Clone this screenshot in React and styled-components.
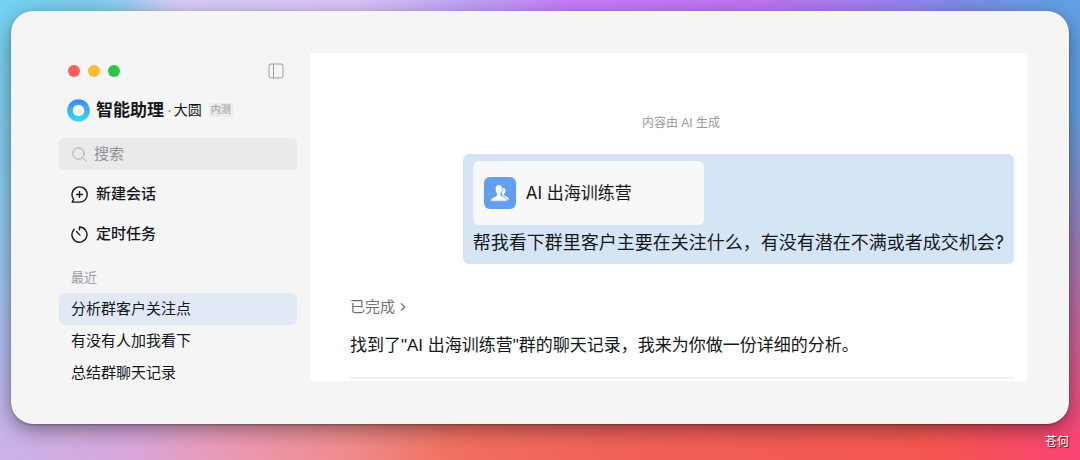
import React from 'react';
import styled, { createGlobalStyle } from 'styled-components';

const GlobalStyle = createGlobalStyle`
  *, *::before, *::after { box-sizing: border-box; }
  html, body { margin: 0; padding: 0; }
  body {
    font-family: 'Liberation Sans', 'Noto Sans CJK SC', sans-serif;
    color: #14171c;
    -webkit-font-smoothing: antialiased;
  }
  button, input { font: inherit; color: inherit; }
`;

const Desktop = styled.div`
  position: relative;
  min-height: 100vh;
  padding: 11px 11px 0;
  display: flex;
  flex-direction: column;
  background:
    radial-gradient(ellipse 180px 260px at 0% 0%, #72d3f3 0%, #7fcbea 40%, transparent 100%),
    linear-gradient(to right, #72d3f3 0%, #78d0ee 7%, #d8cdf8 15%, #d8c4f8 33%, #bea0f6 44%, #c67cf9 53%, #bf74f2 70%, #9b82ee 82%, #7a90e8 90%, #62a0e4 98%);

  &::before {
    content: '';
    position: absolute;
    inset: 0;
    background: linear-gradient(to right, #c9b2e8 0%, #d8a6dc 12%, #ea9bb8 20%, #f08c8c 32%, #f2705f 42%, #f06056 58%, #f4574f 86%, #fb4474 100%);
    mask-image: linear-gradient(to bottom, transparent 25%, #000 95%);
  }
`;

const Window = styled.div`
  position: relative;
  display: flex;
  gap: 13px;
  padding: 42px 42px 35px 48px;
  border-radius: 22px;
  background: #f5f5f5;
  box-shadow: 0 6px 20px rgba(0, 0, 0, 0.4), 0 1px 2px rgba(0, 0, 0, 0.3);
`;

const Sidebar = styled.aside`
  flex: 0 0 238px;
  min-width: 0;
  display: flex;
  flex-direction: column;
`;

const TitleBar = styled.div`
  display: flex;
  align-items: center;
  justify-content: space-between;
  height: 36px;
  padding: 0 13px 0 9px;
`;

const Lights = styled.div`
  display: flex;
  gap: 8px;
`;

const Light = styled.button`
  width: 12px;
  height: 12px;
  padding: 0;
  border: 0;
  border-radius: 50%;
  background: ${(p) => p.$color};
`;

const IconButton = styled.button`
  display: flex;
  padding: 0;
  border: 0;
  background: none;
  color: #9a9da2;
`;

const Brand = styled.div`
  display: flex;
  align-items: center;
  height: 42px;
  padding-left: 8px;
`;

const BrandName = styled.h1`
  margin: 0 0 0 6px;
  padding-top: 2px;
  font-size: 17px;
  line-height: 24px;
  font-weight: 700;
`;

const BrandDot = styled.span`
  margin: 0 2px 0 3px;
  font-size: 14px;
  color: #73767b;
`;

const BrandUser = styled.span`
  font-size: 14px;
  line-height: 20px;
`;

const Badge = styled.span`
  margin-left: 7px;
  padding: 0 2px;
  border-radius: 2px;
  background: #ebebec;
  color: #96999e;
  font-size: 10px;
  line-height: 14px;
`;

const SearchBox = styled.label`
  display: flex;
  align-items: center;
  gap: 7px;
  height: 32px;
  margin: 7px 0 8px;
  padding: 0 13px;
  border-radius: 5px;
  background: #eaeaeb;
  color: #a3a6ab;

  input {
    flex: 1;
    width: 100%;
    min-width: 0;
    padding: 0;
    border: 0;
    outline: 0;
    background: none;
    font-size: 15px;
    line-height: 24px;
  }
  input::placeholder { color: #8e9196; opacity: 1; }
  svg { flex: none; }
`;

const Action = styled.button`
  display: flex;
  align-items: center;
  gap: 8px;
  height: 32px;
  margin-bottom: 8px;
  padding: 0 12px;
  border: 0;
  background: none;
  font-size: 15px;
  line-height: 24px;
  font-weight: 500;
  text-align: left;
`;

const SectionLabel = styled.h2`
  margin: 10px 0 5px;
  padding: 0 12px;
  font-size: 13px;
  line-height: 20px;
  font-weight: 400;
  color: #9a9da2;
`;

const History = styled.nav`
  display: flex;
  flex-direction: column;
`;

const HistoryItem = styled.a`
  padding: 0 12px;
  border-radius: 6px;
  background: ${(p) => (p.$active ? '#e1e8f6' : 'transparent')};
  color: inherit;
  font-size: 15px;
  line-height: 32px;
  text-decoration: none;
`;

const Chat = styled.main`
  flex: 1;
  min-width: 0;
  display: flex;
  flex-direction: column;
  margin-bottom: 8px;
  padding: 60px 13px 2px 40px;
  background: #fff;
`;

const Notice = styled.p`
  margin: 0 0 21px;
  padding-right: 2px;
  font-size: 12px;
  line-height: 20px;
  text-align: center;
  color: #96999e;
`;

const Bubble = styled.section`
  align-self: flex-end;
  padding: 7px 10px;
  border-radius: 6px;
  background: #d6e5f6;
  font-family: Inter, 'Noto Sans CJK SC', sans-serif;

  p {
    margin: 4px 0 0;
    font-size: 18px;
    line-height: 28px;
  }
`;

const GroupCard = styled.div`
  display: flex;
  align-items: center;
  gap: 10px;
  width: 231px;
  height: 64px;
  padding: 0 11px;
  border-radius: 6px;
  background: #f8f8f8;
  font-size: 17px;
  line-height: 28px;
`;

const Status = styled.button`
  align-self: flex-start;
  display: flex;
  align-items: center;
  gap: 5px;
  margin: 31px 0 12px;
  padding: 0;
  border: 0;
  background: none;
  color: #6d7075;
  font-size: 15px;
  line-height: 24px;
`;

const Reply = styled.p`
  margin: 0;
  font-size: 17px;
  line-height: 30px;
`;

const Divider = styled.hr`
  width: 100%;
  height: 2px;
  margin: 16px 0 0;
  border: 0;
  background: #f0f0f1;
`;

const Signature = styled.footer`
  position: relative;
  padding: 8px 0 6px;
  color: #fff;
  font-size: 12px;
  line-height: 20px;
  text-align: right;
  text-shadow: 1px 1px 1px rgba(0, 0, 0, 0.7);
`;

const PanelIcon = () => (
  <svg width="16" height="16" viewBox="0 0 16 16" fill="none" stroke="currentColor">
    <rect x="1" y="1" width="14" height="14" rx="2" />
    <path d="M5.5 1v14" />
  </svg>
);

const LogoIcon = () => (
  <svg width="23" height="23" viewBox="0 0 23 23" fill="none">
    <defs>
      <linearGradient id="ring" x1="0" y1="0" x2="0" y2="1">
        <stop offset="0" stopColor="#3d86f2" />
        <stop offset="1" stopColor="#3bdcf8" />
      </linearGradient>
    </defs>
    <circle cx="11.5" cy="11.5" r="11.3" fill="url(#ring)" />
    <circle cx="11.5" cy="11.5" r="5.8" fill="#fff" />
  </svg>
);

const SearchIcon = () => (
  <svg width="15" height="15" viewBox="0 0 15 15" fill="none" stroke="currentColor" strokeLinecap="round">
    <circle cx="6.5" cy="6.5" r="5.7" />
    <path d="M10.8 10.8l3.2 3.2" />
  </svg>
);

const NewChatIcon = () => (
  <svg width="17" height="17" viewBox="0 0 16 16" fill="none" stroke="currentColor" strokeWidth="1.3" strokeLinecap="round" strokeLinejoin="round">
    <path d="M8 15.200H1.100L2.500 12.500A7.150 7.150 0 1 1 8 15.200z" />
    <path d="M8 5.300v5.400M5.300 8h5.400" />
  </svg>
);

const TimerIcon = () => (
  <svg width="17" height="17" viewBox="0 0 16 16" fill="none" stroke="currentColor" strokeWidth="1.3" strokeLinecap="round" strokeLinejoin="round">
    <path d="M8 3.500V1a7.100 7.100 0 1 1-5 2" />
    <path d="M5.200 5.200L8.400 8.600" />
  </svg>
);

const GroupIcon = () => (
  <svg width="32" height="32" viewBox="0 0 32 32">
    <rect width="32" height="32" rx="6" fill="#629ff0" />
    <path
      fill="#fff"
      d="M17.500 10.800c2.400-.3 3.900.4 3.900 2.600 0 1.500-.5 2.400-1.100 3.200-.6.900-.3 1.700.5 2.200l3 1.700c.8.500 1.300 1 1.200 1.900h-6z"
    />
    <path
      fill="#fff"
      stroke="#629ff0"
      strokeWidth="0.8"
      d="M14.800 7.700c2.300 0 3.600 1.700 3.600 4.300 0 1.900-.6 3.300-1.400 4.400-.6.900-.4 1.900.6 2.400l4 2.100c1.300.7 1.800 1.700 1.700 3.300H6.700c-.1-1.600.4-2.600 1.700-3.300l3.600-1.900c1-.6 1.200-1.700.6-2.600-.8-1.100-1.400-2.500-1.400-4.400 0-2.600 1.300-4.300 3.600-4.300z"
    />
  </svg>
);

const ChevronIcon = () => (
  <svg width="6" height="10" viewBox="0 0 6 10" fill="none" stroke="currentColor" strokeWidth="1.3">
    <path d="M1 1.400L4.700 5L1 8.600" />
  </svg>
);

const lights = [
  ['关闭', '#ff5f57'],
  ['最小化', '#febc2e'],
  ['缩放', '#28c840'],
];

const history = ['分析群客户关注点', '有没有人加我看下', '总结群聊天记录'];

export default function App() {
  return (
    <>
      <GlobalStyle />
      <Desktop>
        <Window>
          <Sidebar>
            <TitleBar>
              <Lights>
                {lights.map(([label, color]) => (
                  <Light key={label} type="button" aria-label={label} $color={color} />
                ))}
              </Lights>
              <IconButton type="button" aria-label="侧边栏"><PanelIcon /></IconButton>
            </TitleBar>
            <Brand>
              <LogoIcon />
              <BrandName>智能助理</BrandName>
              <BrandDot>·</BrandDot>
              <BrandUser>大圆</BrandUser>
              <Badge>内测</Badge>
            </Brand>
            <SearchBox>
              <SearchIcon />
              <input type="text" placeholder="搜索" aria-label="搜索" />
            </SearchBox>
            <Action type="button"><NewChatIcon />新建会话</Action>
            <Action type="button"><TimerIcon />定时任务</Action>
            <SectionLabel>最近</SectionLabel>
            <History>
              {history.map((title, i) => (
                <HistoryItem key={title} href="#" $active={i === 0}>{title}</HistoryItem>
              ))}
            </History>
          </Sidebar>
          <Chat>
            <Notice>内容由 AI 生成</Notice>
            <Bubble>
              <GroupCard><GroupIcon />AI 出海训练营</GroupCard>
              <p>帮我看下群里客户主要在关注什么，有没有潜在不满或者成交机会?</p>
            </Bubble>
            <Status type="button">已完成<ChevronIcon /></Status>
            <Reply>找到了"AI 出海训练营"群的聊天记录，我来为你做一份详细的分析。</Reply>
            <Divider />
          </Chat>
        </Window>
        <Signature>苍何</Signature>
      </Desktop>
    </>
  );
}
